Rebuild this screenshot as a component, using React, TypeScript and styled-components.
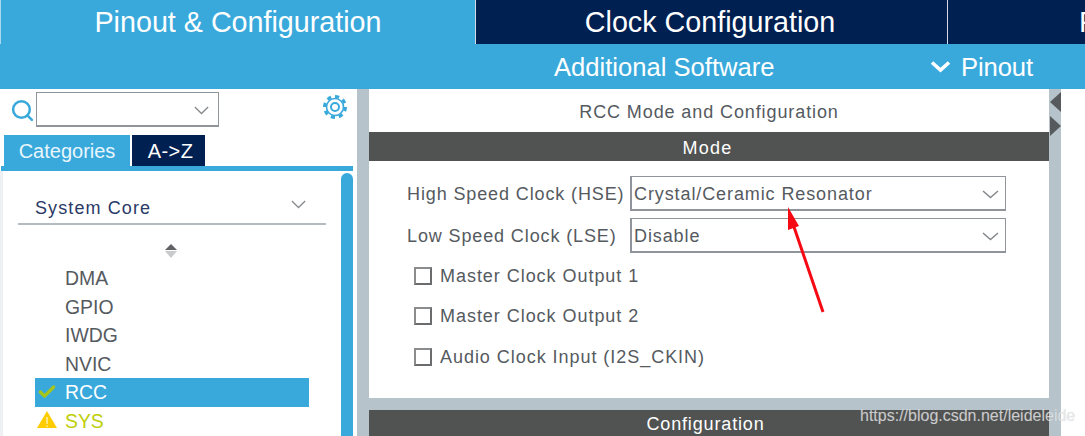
import React from "react";
import styled, { createGlobalStyle } from "styled-components";
import { Check, Search } from "lucide-react";

const blue = "#39a9dc";
const navy = "#002052";
const grey = "#b6c3ca";
const dark = "#515352";
const text = "#555a60";

const GlobalStyle = createGlobalStyle`
  html, body {
    margin: 0;
    padding: 0;
    background: #fff;
  }
  body {
    font-family: "Liberation Sans", Arial, sans-serif;
  }
`;

const Page = styled.div`
  position: relative;
  width: 1085px;
  height: 436px;
  overflow: hidden;
  display: flex;
  flex-direction: column;
`;

const TopTabs = styled.div`
  display: grid;
  grid-template-columns: 475px 472px 1fr;
  height: 44px;
  flex: none;
`;

const TopTab = styled.div<{ $active?: boolean; $first?: boolean }>`
  background: ${(p) => (p.$active ? blue : navy)};
  color: #fff;
  font-size: 28.7px;
  line-height: 44px;
  text-align: center;
  white-space: nowrap;
  overflow: hidden;
  border-left: 1px solid ${(p) => (p.$first ? "#a9d8ef" : "#d5dce5")};
  padding-right: ${(p) => (p.$first ? 0 : 3)}px;
  box-sizing: border-box;
`;

const CutTab = styled(TopTab)`
  text-align: left;
  padding: 0 0 0 131px;
`;

const SubBar = styled.div`
  height: 45px;
  flex: none;
  background: ${blue};
  color: #fff;
  font-size: 25.6px;
  line-height: 46px;
  display: flex;
`;

const SubLabel = styled.div`
  margin-left: 554px;
  width: 376px;
`;

const PinoutLabel = styled.div`
  display: flex;
  align-items: center;
  gap: 10px;
  letter-spacing: -0.1px;
`;

const Body = styled.div`
  flex: 1;
  display: flex;
  min-height: 0;
`;

const Side = styled.aside`
  width: 357px;
  flex: none;
  display: flex;
  flex-direction: column;
  background: #fff;
`;

const SearchRow = styled.div`
  height: 46px;
  flex: none;
  display: flex;
  align-items: flex-start;
  padding: 3px 9px 0 10px;
  box-sizing: border-box;
  color: ${blue};
`;

const SearchIcon = styled(Search)`
  margin: 6px 1px 0 0;
`;

const Combo = styled.div`
  width: 183px;
  height: 35px;
  border: 1px solid #8f959a;
  border-width: 1px 1px 2px 1px;
  box-sizing: border-box;
  display: flex;
  align-items: center;
  justify-content: flex-end;
  padding: 3px 9px 0 0;
`;

const GearIcon = styled.svg`
  margin: 2px 0 0 auto;
`;

const TabRow = styled.div`
  display: flex;
  gap: 2px;
  height: 31px;
  flex: none;
  padding-left: 4px;
`;

const SideTab = styled.div<{ $active?: boolean }>`
  width: ${(p) => (p.$active ? "126px" : "73px")};
  background: ${(p) => (p.$active ? blue : navy)};
  color: ${(p) => (p.$active ? "#e8f6fc" : "#fff")};
  font-size: 20px;
  line-height: 33px;
  text-align: center;
  letter-spacing: ${(p) => (p.$active ? 0 : 0.4)}px;
  padding-left: ${(p) => (p.$active ? 0 : 4)}px;
  box-sizing: border-box;
`;

const TabLine = styled.div`
  height: 5px;
  flex: none;
  margin: 0 4px 0 1px;
  background: ${blue};
`;

const TreeWrap = styled.div`
  flex: 1;
  display: flex;
  min-height: 0;
  border-left: 3px solid #eef0f3;
  padding-top: 2px;
`;

const Tree = styled.div`
  width: 338px;
  flex: none;
  padding: 24px 0 0 15px;
  box-sizing: border-box;
`;

const TreeHead = styled.div`
  width: 308px;
  height: 28px;
  border-bottom: 2px solid #b4bcc2;
  display: flex;
  justify-content: space-between;
  padding: 0 20px 0 17px;
  box-sizing: border-box;
  color: #2a3a66;
  font-size: 18px;
  letter-spacing: 1.1px;
  line-height: 22px;
`;

const HeadChevron = styled.svg`
  margin-top: 3px;
`;

const SortMark = styled.div`
  display: flex;
  flex-direction: column;
  align-items: center;
  gap: 1px;
  width: 306px;
  height: 20px;
  margin: 19px 0 0;
`;

const Tri = styled.span<{ $down?: boolean }>`
  width: 0;
  height: 0;
  border-left: 6px solid transparent;
  border-right: 6px solid transparent;
  ${(p) =>
    p.$down
      ? "border-top: 7px solid #c8cacc;"
      : "border-bottom: 6px solid #606265;"}
`;

const Item = styled.div<{ $selected?: boolean; $warn?: boolean }>`
  width: 274px;
  height: 28.5px;
  margin-left: 17px;
  padding-left: 30px;
  box-sizing: border-box;
  position: relative;
  font-size: 19.4px;
  line-height: 29.5px;
  background: ${(p) => (p.$selected ? blue : "transparent")};
  color: ${(p) => (p.$selected ? "#fff" : p.$warn ? "#bfcf0a" : text)};
`;

const ItemMark = styled.span`
  position: absolute;
  left: 2px;
  top: 4px;
  display: flex;
`;

const ScrollBar = styled.div`
  width: 12px;
  flex: none;
  background: ${blue};
  border-radius: 6px 6px 0 0;
`;

const Gutter = styled.div`
  flex: 1;
  display: flex;
  background: ${grey};
  padding-left: 12px;
  position: relative;
`;

const Main = styled.main`
  width: 680px;
  flex: none;
  display: flex;
  flex-direction: column;
`;

const ModePanel = styled.section`
  height: 309px;
  flex: none;
  background: #fff;
`;

const PanelTitle = styled.div`
  height: 43px;
  line-height: 46px;
  text-align: center;
  font-size: 18px;
  letter-spacing: 0.9px;
  color: ${text};
`;

const SectionBar = styled.div<{ $spacing: number; $shift: number }>`
  height: 29px;
  background: ${dark};
  color: #fff;
  text-align: center;
  font-size: 18px;
  letter-spacing: ${(p) => p.$spacing}px;
  padding-right: ${(p) => p.$shift}px;
  line-height: 32px;
`;

const ConfigBar = styled(SectionBar)`
  margin-top: 12px;
  flex: 1;
  line-height: 29px;
`;

const Form = styled.div`
  padding: 15px 0 0 38px;
  display: flex;
  flex-direction: column;
`;

const SelectRow = styled.div`
  display: flex;
  align-items: center;
  height: 35px;
  margin-bottom: 7px;
  font-size: 18px;
  letter-spacing: 0.9px;
  color: ${text};
`;

const SelectLabel = styled.div`
  width: 223px;
  white-space: nowrap;
  letter-spacing: 0.88px;
  padding-top: 2px;
`;

const Select = styled.div`
  width: 376px;
  height: 35px;
  border: 2px solid #8f959a;
  border-width: 1px 1px 2px 2px;
  box-sizing: border-box;
  display: flex;
  align-items: center;
  justify-content: space-between;
  padding: 2px 6px 0 2px;
  white-space: nowrap;
`;

const CheckList = styled.div`
  padding-top: 5px;
`;

const CheckRow = styled.label<{ $gap: number }>`
  display: flex;
  align-items: center;
  gap: 8px;
  height: 22px;
  margin: 0 0 ${(p) => p.$gap}px 7px;
  font-size: 18px;
  letter-spacing: 0.96px;
  color: ${text};
`;

const Box = styled.span`
  width: 18px;
  height: 18px;
  border: 2px solid #6a6c6e;
  border-color: #8a8c8e #6a6c6e #6a6c6e #8a8c8e;
  box-sizing: border-box;
  flex: none;
`;

const Splitters = styled.div`
  position: absolute;
  left: 693px;
  top: 3px;
  display: flex;
  flex-direction: column;
  gap: 4px;
`;

const SplitArrow = styled.span<{ $right?: boolean }>`
  width: 0;
  height: 0;
  border-top: 10px solid transparent;
  border-bottom: 10px solid transparent;
  ${(p) =>
    p.$right
      ? "border-left: 11px solid #565a5c;"
      : "border-right: 11px solid #565a5c;"}
`;

const RightBlank = styled.div`
  width: 24px;
  margin-left: auto;
  background: #fff;
`;

const ArrowOverlay = styled.svg`
  position: absolute;
  left: 780px;
  top: 200px;
`;

const Watermark = styled.div`
  position: absolute;
  left: 860px;
  top: 407px;
  font-size: 16px;
  color: rgba(232, 234, 236, 0.78);
  text-shadow: 0 0 1px rgba(150, 150, 150, 0.35);
  white-space: nowrap;
`;

const items = ["DMA", "GPIO", "IWDG", "NVIC"];

const FlatChevron = ({ as: Comp = "svg", width = 17 }: { as?: any; width?: number }) => (
  <Comp width={width} height="9" viewBox="0 0 17 9" preserveAspectRatio="none" fill="none" stroke="#85888b" strokeWidth="1.5">
    <path d="M1 1 L8.5 7.5 L16 1" />
  </Comp>
);

export default function App() {
  return (
    <Page>
      <GlobalStyle />
      <TopTabs>
        <TopTab $active $first>
          Pinout &amp; Configuration
        </TopTab>
        <TopTab>Clock Configuration</TopTab>
        <CutTab>Project Manager</CutTab>
      </TopTabs>
      <SubBar>
        <SubLabel>Additional Software</SubLabel>
        <PinoutLabel>
          <svg width="21" height="13" viewBox="0 0 21 13" fill="none" stroke="#fff" strokeWidth="3.6">
            <path d="M2 2.5 L10.5 10 L19 2.5" />
          </svg>
          Pinout
        </PinoutLabel>
      </SubBar>
      <Body>
        <Side>
          <SearchRow>
            <SearchIcon size={25} strokeWidth={2.4} />
            <Combo>
              <FlatChevron width={15} />
            </Combo>
            <GearIcon width="26" height="26" viewBox="0 0 26 26" fill="none" stroke={blue}>
              <circle cx="13" cy="13" r="10.5" strokeWidth="3" strokeDasharray="4.2 4" />
              <circle cx="13" cy="13" r="8.5" strokeWidth="1.6" />
              <circle cx="13" cy="13" r="4" strokeWidth="2" />
            </GearIcon>
          </SearchRow>
          <TabRow>
            <SideTab $active>Categories</SideTab>
            <SideTab>A-&gt;Z</SideTab>
          </TabRow>
          <TabLine />
          <TreeWrap>
            <Tree>
              <TreeHead>
                System Core
                <FlatChevron as={HeadChevron} width={15} />
              </TreeHead>
              <SortMark>
                <Tri />
                <Tri $down />
              </SortMark>
              {items.map((name) => (
                <Item key={name}>{name}</Item>
              ))}
              <Item $selected>
                <ItemMark>
                  <Check size={20} strokeWidth={4} color="#a5c41c" />
                </ItemMark>
                RCC
              </Item>
              <Item $warn>
                <ItemMark>
                  <svg width="20" height="18" viewBox="0 0 20 18">
                    <path d="M10 0 L20 17 H0 Z" fill="#ffcc00" />
                    <path d="M10 6 V13 M10 14.5 V16" stroke="#fff" strokeWidth="1" />
                  </svg>
                </ItemMark>
                SYS
              </Item>
            </Tree>
            <ScrollBar />
          </TreeWrap>
        </Side>
        <Gutter>
          <Main>
            <ModePanel>
              <PanelTitle>RCC Mode and Configuration</PanelTitle>
              <SectionBar $spacing={1.3} $shift={3}>
                Mode
              </SectionBar>
              <Form>
                <SelectRow>
                  <SelectLabel>High Speed Clock (HSE)</SelectLabel>
                  <Select>
                    Crystal/Ceramic Resonator
                    <FlatChevron />
                  </Select>
                </SelectRow>
                <SelectRow>
                  <SelectLabel>Low Speed Clock (LSE)</SelectLabel>
                  <Select>
                    Disable
                    <FlatChevron />
                  </Select>
                </SelectRow>
                <CheckList>
                  <CheckRow $gap={18}>
                    <Box />
                    Master Clock Output 1
                  </CheckRow>
                  <CheckRow $gap={19}>
                    <Box />
                    Master Clock Output 2
                  </CheckRow>
                  <CheckRow $gap={0}>
                    <Box />
                    Audio Clock Input (I2S_CKIN)
                  </CheckRow>
                </CheckList>
              </Form>
            </ModePanel>
            <ConfigBar $spacing={0.85} $shift={7}>
              Configuration
            </ConfigBar>
          </Main>
          <Splitters>
            <SplitArrow />
            <SplitArrow $right />
          </Splitters>
          <RightBlank />
        </Gutter>
      </Body>
      <ArrowOverlay width="60" height="120" viewBox="0 0 60 120">
        <path d="M43 112 L13 24" stroke="#f50a14" strokeWidth="3" fill="none" />
        <path d="M8 7 L19 26 L8 30 Z" fill="#f50a14" />
      </ArrowOverlay>
      <Watermark>https://blog.csdn.net/leideleide</Watermark>
    </Page>
  );
}
